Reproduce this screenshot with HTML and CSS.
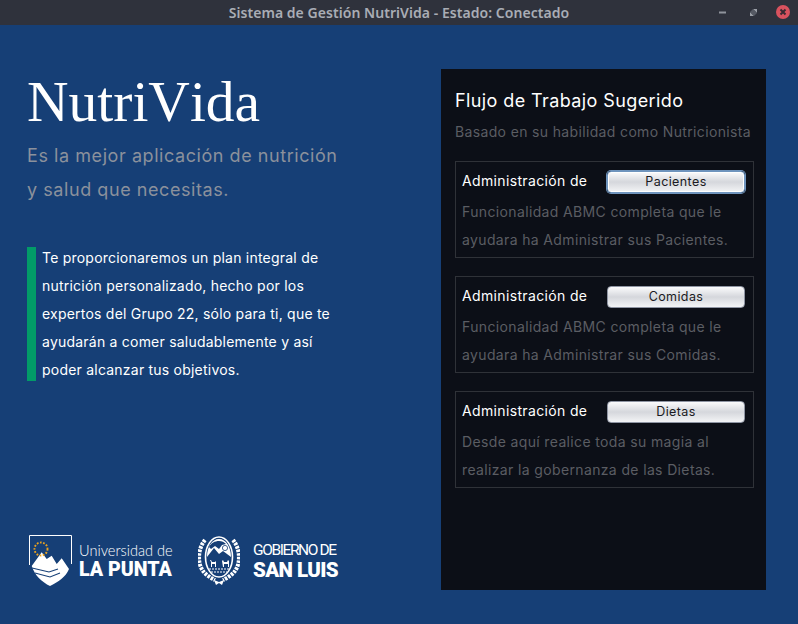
FILE: index.html
```html
<!DOCTYPE html>
<html>
<head>
  <title>Sistema de Gestión NutriVida - Estado: Conectado</title>
  <link rel="stylesheet" href="styles.css">
</head>
<body>
  <header class="titlebar">
    <span class="window-title">Sistema de Gestión NutriVida - Estado: Conectado</span>
    <div class="window-buttons">
      <svg class="win-min" width="7" height="3" viewBox="0 0 7 3"><rect width="7" height="2" y="0.5" fill="#8f939c"/></svg>
      <svg class="win-max" width="7" height="7" viewBox="0 0 7 7"><path d="M3 0h4v4zM0 3l4 4H0z" fill="#9a9ea6"/><path d="M3 0L0 3l4 4 3-3z" fill="#565a64"/></svg>
      <svg class="win-close" width="14" height="14" viewBox="0 0 14 14"><circle cx="7" cy="7" r="7" fill="#d9525e"/><path d="M4.5 4.5l5 5M9.5 4.5l-5 5" stroke="#3a2a33" stroke-width="2"/></svg>
    </div>
  </header>

  <main class="content">
    <section class="intro">
      <h1 class="brand">NutriVida</h1>
      <p class="tagline">Es la mejor aplicación de nutrición<br>y salud que necesitas.</p>

      <div class="pitch">
        <p class="pitch-text">
          Te proporcionaremos un plan integral de<br>
          nutrición personalizado, hecho por los<br>
          expertos del Grupo 22, sólo para ti, que te<br>
          ayudarán a comer saludablemente y así<br>
          poder alcanzar tus objetivos.
        </p>
      </div>

      <div class="logos">
        <div class="logo logo-ulp">
          <svg width="44" height="52" viewBox="0 0 44 52">
            <path d="M.5 30V.5h42V29" fill="none" stroke="#fff"/>
            <path d="M2.7 31L12.7 17.3l5 6.7 5-3.3 5 8.3 5-5.7L40 34C37 42 29 47 21 51 13 47 6 41 2.7 31z" fill="#fff"/>
            <path d="M3 33l17 4 9-3M6 38l15 4 10-4" fill="none" stroke="#163f76" stroke-width="1.1"/>
            <circle cx="12" cy="14" r="6.5" fill="none" stroke="#e9a21f" stroke-width="1.9" stroke-dasharray="1.7 1.5"/>
          </svg>
          <div class="logo-text">
            <span class="ulp-small">Universidad de</span>
            <span class="ulp-big">LA PUNTA</span>
          </div>
        </div>
        <div class="logo logo-sl">
          <svg width="42" height="52" viewBox="0 0 42 52">
            <path d="M7 5C0 13-1 28 5 36c3 4 8 7 12 9M35 5c7 8 8 23 2 31-3 4-8 7-12 9" fill="none" stroke="#fff" stroke-width="4" stroke-dasharray="2.6 1"/>
            <ellipse cx="21" cy="22" rx="13.5" ry="20" fill="#163f76" stroke="#fff" stroke-width="1.6"/>
            <path d="M9 22l7-9 5 6 4-3 8 6C33 12 28 4 21 4S9 12 9 22z" fill="#fff"/>
            <path d="M11 12C13 8 17 6 21 6c3 0 5 1 7 3l-4 1-3 4-4-3-4 3z" fill="#163f76"/>
            <circle cx="27" cy="13" r="2.6" fill="#fff" stroke="#163f76" stroke-width=".8"/>
            <path d="M12 25h1l1 2h3l1-1v6h-1v-3h-3v3h-1v-5zM24 26l1-1 1 2h3l1-2 1 1v6h-1v-3h-4v3h-1z" fill="#fff"/>
            <path d="M11 34h20M13 37h16" stroke="#fff" stroke-width="1.2" stroke-dasharray="2 1"/>
            <path d="M16 45l5 2 5-2-2 5-3-2-3 2z" fill="#fff"/>
          </svg>
          <div class="logo-text">
            <span class="sl-small">GOBIERNO DE</span>
            <span class="sl-big">SAN LUIS</span>
          </div>
        </div>
      </div>
    </section>

    <aside class="workflow">
      <h2 class="workflow-title">Flujo de Trabajo Sugerido</h2>
      <p class="workflow-sub">Basado en su habilidad como Nutricionista</p>

      <div class="card">
        <div class="card-head">
          <span class="card-label">Administración de</span>
          <button class="card-button focused">Pacientes</button>
        </div>
        <p class="card-text">Funcionalidad ABMC completa que le<br>ayudara ha Administrar sus Pacientes.</p>
      </div>

      <div class="card">
        <div class="card-head">
          <span class="card-label">Administración de</span>
          <button class="card-button">Comidas</button>
        </div>
        <p class="card-text">Funcionalidad ABMC completa que le<br>ayudara ha Administrar sus Comidas.</p>
      </div>

      <div class="card">
        <div class="card-head">
          <span class="card-label">Administración de</span>
          <button class="card-button">Dietas</button>
        </div>
        <p class="card-text">Desde aquí realice toda su magia al<br>realizar la gobernanza de las Dietas.</p>
      </div>
    </aside>
  </main>
</body>
</html>
```

FILE: styles.css
```css
html, body {
  margin: 0;
  height: 100%;
}

body {
  background-color: #163f76;
  font-family: "Inter", "Open Sans", sans-serif;
  overflow: hidden;
}

.titlebar {
  height: 25px;
  background-color: #2f323c;
  display: flex;
  align-items: center;
  justify-content: center;
  position: relative;
}

.window-title {
  font-family: "Noto Sans", sans-serif;
  font-size: 14px;
  font-weight: 600;
  letter-spacing: 0.05px;
  color: #a9adb5;
}

.window-buttons {
  position: absolute;
  right: 8px;
  top: 5px;
  display: flex;
  align-items: center;
}

.window-buttons svg {
  display: block;
}

.win-max {
  margin: 0 19px 0 24px;
}

.content {
  display: flex;
  height: 599px;
}

.intro {
  width: 441px;
  box-sizing: border-box;
  padding: 40px 0 0 27px;
}

.brand {
  margin: 0;
  font-family: "Liberation Serif", serif;
  font-size: 57.5px;
  font-weight: normal;
  font-kerning: none;
  line-height: 74px;
  color: #fff;
}

.tagline {
  margin: 0;
  font-size: 18px;
  letter-spacing: 0.56px;
  line-height: 34px;
  color: #8b919c;
}

.pitch {
  margin-top: 40px;
  height: 134px;
  display: flex;
  align-items: center;
  box-sizing: border-box;
  border-left: 9px solid #029b68;
  padding-left: 6px;
}

.pitch-text {
  margin: 0;
  font-size: 14px;
  letter-spacing: 0.22px;
  line-height: 28px;
  color: #fff;
}

.logos {
  margin-top: 154px;
  display: flex;
  align-items: center;
  padding-left: 2px;
}

.logo {
  display: flex;
  align-items: center;
}

.logo svg {
  display: block;
}

.logo-ulp {
  width: 169px;
  gap: 6px;
}

.logo-sl {
  gap: 13px;
}

.logo-text {
  display: flex;
  flex-direction: column;
  color: #fff;
}

.ulp-small {
  font-family: "Lato", sans-serif;
  font-size: 14.6px;
  font-weight: 300;
  line-height: 17px;
}

.ulp-big {
  font-family: "Roboto", sans-serif;
  font-size: 19.6px;
  font-weight: 900;
  line-height: 22px;
}

.sl-small {
  font-family: "Roboto", sans-serif;
  font-size: 15.5px;
  line-height: 18px;
  letter-spacing: -1.4px;
}

.sl-big {
  font-family: "Roboto", sans-serif;
  font-size: 20.5px;
  font-weight: 900;
  line-height: 22px;
  letter-spacing: -0.6px;
}

.workflow {
  width: 325px;
  height: 521px;
  margin-top: 44px;
  box-sizing: border-box;
  background-color: #0c0f17;
  padding: 20px 12px 0 14px;
}

.workflow-title {
  margin: 0;
  font-size: 18px;
  font-weight: normal;
  letter-spacing: 0.4px;
  line-height: 24px;
  color: #fff;
}

.workflow-sub {
  margin: 8px 0 18px;
  font-size: 14px;
  letter-spacing: 0.35px;
  line-height: 22px;
  color: #5b5d63;
}

.card {
  border: 1px solid #2f3238;
  height: 97px;
  box-sizing: border-box;
  padding: 6px 8px 0 6px;
  margin-bottom: 18px;
}

.card-head {
  display: flex;
  align-items: center;
  justify-content: space-between;
  height: 27px;
}

.card-label {
  font-size: 14px;
  letter-spacing: 0.35px;
  padding-bottom: 2px;
  color: #fff;
}

.card-button {
  width: 138px;
  height: 22px;
  padding: 0;
  border: 1px solid #8f95a3;
  border-radius: 4px;
  background: linear-gradient(#fbfbfc, #d5d7dc 50%, #f3f4f6);
  font-family: "Inter", sans-serif;
  font-size: 12.5px;
  letter-spacing: 0.4px;
  color: #1a1a22;
}

.card-button.focused {
  border-color: #6f94bd;
  box-shadow: 0 0 0 1px #6f94bd, inset 0 0 0 1px #fff;
}

.card-text {
  margin: 3px 0 0;
  font-size: 14px;
  letter-spacing: 0.36px;
  line-height: 28px;
  color: #5b5d63;
}
```
